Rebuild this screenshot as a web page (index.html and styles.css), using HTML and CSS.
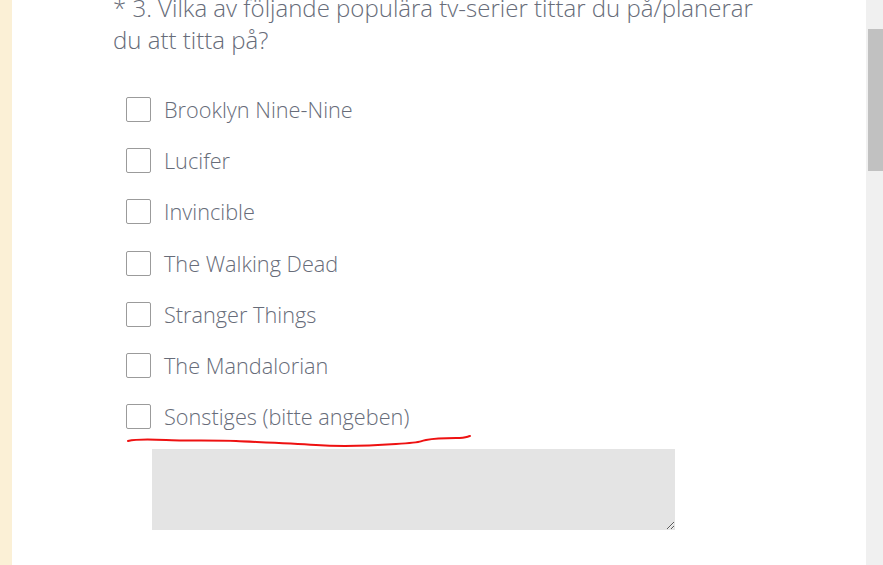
FILE: index.html
```html
<!DOCTYPE html>
<html>
<head>
<meta charset="utf-8">
<link rel="stylesheet" href="styles.css">
</head>
<body>
<div class="page">
  <div class="left-strip"></div>
  <main class="main">
    <div class="question">
      <h2 class="q-title">* 3. Vilka av följande populära tv-serier tittar du på/planerar du att titta på?</h2>
      <ul class="options">
        <li class="option"><span class="box"></span><span class="label">Brooklyn Nine-Nine</span></li>
        <li class="option"><span class="box"></span><span class="label">Lucifer</span></li>
        <li class="option"><span class="box"></span><span class="label">Invincible</span></li>
        <li class="option"><span class="box"></span><span class="label">The Walking Dead</span></li>
        <li class="option"><span class="box"></span><span class="label">Stranger Things</span></li>
        <li class="option"><span class="box"></span><span class="label">The Mandalorian</span></li>
        <li class="option other"><span class="box"></span><span class="label">Sonstiges (bitte angeben)</span>
          <svg class="scribble" width="360" height="20" viewBox="0 0 360 20">
            <path d="M2 9 C 10 7, 20 7, 40 8 S 90 8, 110 9 S 160 11, 190 13 S 240 14, 270 12 S 290 10, 300 8 S 320 6, 330 6 S 340 5, 344 4" fill="none" stroke="#ee1111" stroke-width="2" stroke-linecap="round"/>
          </svg>
        </li>
      </ul>
      <textarea class="other-text"></textarea>
    </div>
  </main>
  <div class="scrollbar"><div class="thumb"></div></div>
</div>
</body>
</html>
```

FILE: styles.css
```css
html, body {
  margin: 0;
  padding: 0;
  height: 100%;
  overflow: hidden;
  background: #ffffff;
}
.page {
  display: flex;
  height: 565px;
  width: 883px;
}
.left-strip {
  width: 12px;
  flex: none;
  background: #fbf0d6;
}
.main {
  flex: 1;
  background: #ffffff;
  padding-left: 101px;
  overflow: hidden;
}
.question {
  margin-top: -8px;
}
.q-title {
  margin: 0;
  width: 670px;
  font-family: "Open Sans", sans-serif;
  font-weight: 300;
  font-size: 24px;
  line-height: 32px;
  color: #676c79;
}
.options {
  list-style: none;
  margin: 41px 0 0 0;
  padding: 0 0 0 13px;
}
.option {
  display: flex;
  align-items: center;
  height: 25px;
  margin-bottom: 26.2px;
  position: relative;
}
.box {
  width: 23px;
  height: 23px;
  border: 1px solid #9b9b9b;
  border-radius: 2px;
  flex: none;
  box-sizing: content-box;
}
.label {
  margin-left: 13px;
  font-family: "Open Sans", sans-serif;
  font-weight: 300;
  font-size: 21.7px;
  color: #676c79;
  white-space: nowrap;
}
.other {
  margin-bottom: 0;
}
.scribble {
  position: absolute;
  left: 0;
  top: 28px;
}
.other-text {
  display: block;
  margin: 20px 0 0 39px;
  width: 523px;
  height: 81px;
  box-sizing: border-box;
  border: none;
  background: #e4e4e4;
  resize: both;
  outline: none;
}
.scrollbar {
  width: 17px;
  flex: none;
  background: #f0f0f0;
  padding: 29px 0 0 2px;
  box-sizing: border-box;
}
.thumb {
  width: 15px;
  height: 142px;
  background: #c1c1c1;
}
```
